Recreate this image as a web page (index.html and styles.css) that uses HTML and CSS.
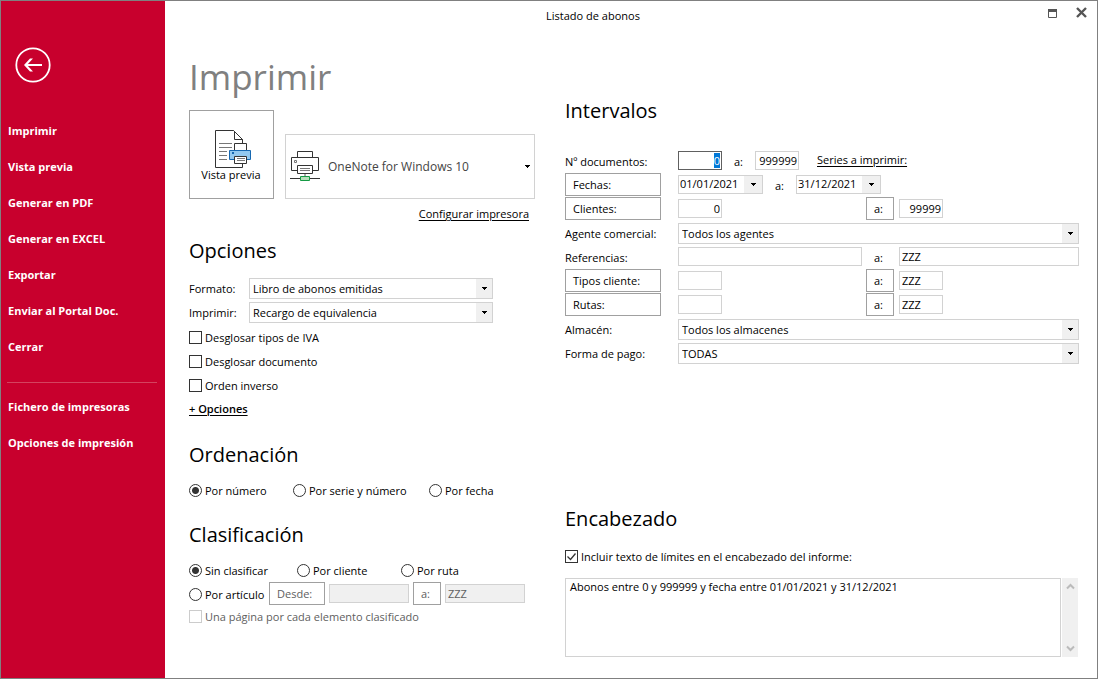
FILE: index.html
```html
<!DOCTYPE html>
<html lang="es">
<head>
<meta charset="utf-8">
<meta name="viewport" content="width=device-width, initial-scale=1">
<title>Listado de abonos</title>
<link rel="stylesheet" href="styles.css">
</head>
<body>
<div class="window">
  <aside class="sidebar">
    <button class="back" type="button" aria-label="Volver">
      <svg width="36" height="36" viewBox="0 0 36 36" fill="none" stroke="#fff">
        <circle cx="18" cy="18" r="16.7" stroke-width="1.8"/>
        <path d="M27 18H11" stroke-width="2"/>
        <path d="M18 11.5H15L9 18L15 24.5H18L12 18Z" fill="#fff" stroke="none"/>
      </svg>
    </button>
    <nav class="menu">
      <button type="button">Imprimir</button>
      <button type="button">Vista previa</button>
      <button type="button">Generar en PDF</button>
      <button type="button">Generar en EXCEL</button>
      <button type="button">Exportar</button>
      <button type="button">Enviar al Portal Doc.</button>
      <button type="button">Cerrar</button>
      <hr>
      <button type="button">Fichero de impresoras</button>
      <button type="button">Opciones de impresión</button>
    </nav>
  </aside>

  <div class="content">
    <header class="titlebar">
      <div class="caption">Listado de abonos</div>
      <div class="window-buttons">
        <button type="button" aria-label="Maximizar">
          <svg width="11" height="11" viewBox="0 0 11 11"><path d="M1.5 2.5H9.5V10.5H1.5Z" fill="none" stroke="#555"/><path d="M1 2H10V5H1Z" fill="#555"/></svg>
        </button>
        <button type="button" aria-label="Cerrar ventana">
          <svg width="11" height="11" viewBox="0 0 11 11"><path d="M1 1L10 10M10 1L1 10" fill="none" stroke="#555" stroke-width="2.4"/></svg>
        </button>
      </div>
    </header>

    <main class="columns">
      <div class="column">
        <h1>Imprimir</h1>
        <div class="print-row">
          <button class="preview" type="button">
            <svg width="38" height="40" viewBox="0 0 38 40" fill="none" stroke="#333">
              <path d="M28.5 15V10.5L19.5 1.5H1.5V38.5H28.5V34"/>
              <path d="M20.5 2.5V10.5H28.5M19.5 1.5L28.5 10.5"/>
              <path d="M5 14.5H18M5 18.5H18M5 22.5H13M5 26.5H13M5 30.5H13" stroke="#777"/>
              <path d="M20.5 14.5H32.5V21.5H20.5Z" fill="#fff"/>
              <path d="M15.5 21.5H36.5V30.5H15.5Z" fill="#92c9f0" stroke="#1668b1"/>
              <path d="M18 23H20V25H18Z" fill="#1668b1" stroke="none"/>
              <path d="M20.5 27.5H32.5V34.5H20.5Z" fill="#fff"/>
              <path d="M23 29.5H31M23 31.5H31" stroke="#777"/>
            </svg>
            <span>Vista previa</span>
          </button>
          <div class="printer">
            <svg width="30" height="32" viewBox="0 0 30 32" fill="none" stroke="#333">
              <path d="M7.5 6.5V0.5H22.5V6.5"/>
              <path d="M7.5 19.5H1.5V6.5H28.5V19.5H22.5"/>
              <path d="M4.5 9.5H6.5V11.5H4.5Z" stroke="#777"/>
              <path d="M7.5 14.5H22.5V22.5H7.5Z" fill="#fff"/>
              <path d="M10 17.5H20M10 19.5H20" stroke="#777"/>
              <path d="M15 23V25" stroke="#aaa" stroke-width="2"/>
              <path d="M0 27.5H30"/>
              <path d="M10.5 25.5H19.5V29.5H10.5Z" fill="#b5deb9" stroke="#159a44"/>
            </svg>
            <select aria-label="Impresora"><option>OneNote for Windows 10</option></select>
          </div>
        </div>
        <a class="configure" href="#">Configurar impresora</a>

        <section class="options">
          <h2>Opciones</h2>
          <div class="option-row">
            <label for="formato">Formato:</label>
            <select id="formato" class="field"><option>Libro de abonos emitidas</option></select>
          </div>
          <div class="option-row">
            <label for="imprimir">Imprimir:</label>
            <select id="imprimir" class="field"><option>Recargo de equivalencia</option></select>
          </div>
          <div class="checks">
            <label class="choice"><input type="checkbox">Desglosar tipos de IVA</label>
            <label class="choice"><input type="checkbox">Desglosar documento</label>
            <label class="choice"><input type="checkbox">Orden inverso</label>
          </div>
          <a class="more" href="#">+ Opciones</a>
        </section>

        <section class="sorting">
          <h2>Ordenación</h2>
          <div class="order-row">
            <label class="choice"><input type="radio" name="orden" checked>Por número</label>
            <label class="choice"><input type="radio" name="orden">Por serie y número</label>
            <label class="choice"><input type="radio" name="orden">Por fecha</label>
          </div>
        </section>

        <section class="grouping">
          <h2>Clasificación</h2>
          <div class="group-row">
            <label class="choice"><input type="radio" name="clase" checked>Sin clasificar</label>
            <label class="choice"><input type="radio" name="clase">Por cliente</label>
            <label class="choice"><input type="radio" name="clase">Por ruta</label>
          </div>
          <div class="article-row">
            <label class="choice"><input type="radio" name="clase">Por artículo</label>
            <button class="pick" type="button" disabled>Desde:</button>
            <input class="field" type="text" aria-label="Desde artículo" disabled>
            <button class="pick" type="button" disabled>a:</button>
            <input class="field" type="text" aria-label="Hasta artículo" value="ZZZ" disabled>
          </div>
          <label class="choice page-check"><input type="checkbox" disabled>Una página por cada elemento clasificado</label>
        </section>
      </div>

      <div class="column right">
        <section>
          <h2>Intervalos</h2>
          <div class="range">
            <label for="doc-desde">Nº documentos:</label>
            <div class="inline">
              <input id="doc-desde" class="field short number" type="text" value="0" autofocus>
              <label class="to" for="doc-hasta">a:</label>
              <input id="doc-hasta" class="field short number" type="text" value="999999">
              <a class="series" href="#">Series a imprimir:</a>
            </div>
          </div>
          <div class="range">
            <button class="pick" type="button">Fechas:</button>
            <div class="inline">
              <div class="field date"><input id="fecha-desde" type="text" aria-label="Desde fecha" value="01/01/2021"><button type="button" aria-label="Abrir calendario desde"></button></div>
              <label class="to" for="fecha-hasta">a:</label>
              <div class="field date"><input id="fecha-hasta" type="text" value="31/12/2021"><button type="button" aria-label="Abrir calendario hasta"></button></div>
            </div>
          </div>
          <div class="range">
            <button class="pick" type="button">Clientes:</button>
            <input class="field short number" type="text" aria-label="Desde cliente" value="0">
            <button class="pick" type="button">a:</button>
            <input class="field short number" type="text" aria-label="Hasta cliente" value="99999">
          </div>
          <div class="range">
            <label for="agente">Agente comercial:</label>
            <select id="agente" class="field wide"><option>Todos los agentes</option></select>
          </div>
          <div class="range">
            <label for="ref-desde">Referencias:</label>
            <input id="ref-desde" class="field" type="text">
            <label class="between" for="ref-hasta">a:</label>
            <input id="ref-hasta" class="field" type="text" value="ZZZ">
          </div>
          <div class="range">
            <button class="pick" type="button">Tipos cliente:</button>
            <input class="field short" type="text" aria-label="Desde tipo de cliente">
            <button class="pick" type="button">a:</button>
            <input class="field short" type="text" aria-label="Hasta tipo de cliente" value="ZZZ">
          </div>
          <div class="range">
            <button class="pick" type="button">Rutas:</button>
            <input class="field short" type="text" aria-label="Desde ruta">
            <button class="pick" type="button">a:</button>
            <input class="field short" type="text" aria-label="Hasta ruta" value="ZZZ">
          </div>
          <div class="range">
            <label for="almacen">Almacén:</label>
            <select id="almacen" class="field wide"><option>Todos los almacenes</option></select>
          </div>
          <div class="range">
            <label for="pago">Forma de pago:</label>
            <select id="pago" class="field wide"><option>TODAS</option></select>
          </div>
        </section>

        <section class="heading-text">
          <h2>Encabezado</h2>
          <label class="choice"><input type="checkbox" checked>Incluir texto de límites en el encabezado del informe:</label>
          <div class="memo">
            <textarea aria-label="Texto del encabezado">Abonos entre 0 y 999999 y fecha entre 01/01/2021 y 31/12/2021</textarea>
            <div class="scroll">
              <button type="button" aria-label="Subir"><svg width="9" height="7" viewBox="0 0 9 7"><path d="M1 5.5L4.5 2L8 5.5" fill="none" stroke="#bbb" stroke-width="2"/></svg></button>
              <button type="button" aria-label="Bajar"><svg width="9" height="7" viewBox="0 0 9 7"><path d="M1 1.5L4.5 5L8 1.5" fill="none" stroke="#bbb" stroke-width="2"/></svg></button>
            </div>
          </div>
        </section>
      </div>
    </main>
  </div>
</div>
<script src="main.js"></script>
</body>
</html>
```

FILE: styles.css
```css
* {
  box-sizing: border-box;
}

:root {
  --line: #d2d2d2;
  --button-line: #a0a0a0;
  --arrow: url("data:image/svg+xml,%3Csvg xmlns='http://www.w3.org/2000/svg' width='5' height='3'%3E%3Cpath d='M0 0H5V1H4V2H3V3H2V2H1V1H0Z' fill='%23000'/%3E%3C/svg%3E");
}

body {
  margin: 0;
  background: #fff;
  color: #000;
  font: 11px/16px "Open Sans", "Noto Sans", sans-serif;
}

button,
input,
select,
textarea {
  margin: 0;
  padding: 0;
  border: 0;
  border-radius: 0;
  outline: 0;
  background: none;
  color: inherit;
  font: inherit;
}

a {
  color: inherit;
  text-underline-offset: 2px;
}

svg {
  display: block;
  flex: none;
}

.window {
  display: flex;
  min-height: 100vh;
  border: 1px solid #808080;
}

/* Sidebar */

.sidebar {
  flex: none;
  width: 164px;
  padding-top: 46px;
  background: #c8002d;
  color: #fff;
}

.back {
  display: block;
  margin-left: 14px;
}

.menu {
  display: flex;
  flex-direction: column;
  padding: 30px 8px 0 6px;
}

.menu button {
  height: 36px;
  padding-left: 1px;
  font-weight: 700;
  text-align: left;
}

.menu hr {
  width: 100%;
  height: 1px;
  margin: 17px 0 6px;
  border: 0;
  background: #d4435f;
}

/* Title bar */

.content {
  display: flex;
  flex: 1;
  flex-direction: column;
  min-width: 0;
}

.titlebar {
  display: flex;
  height: 32px;
}

.caption {
  flex: 1;
  padding-top: 7px;
  text-align: center;
}

.window-buttons {
  display: flex;
  justify-content: flex-end;
  gap: 18px;
  width: 76px;
  padding: 6px 10px 0 0;
}

.window-buttons button {
  height: 11px;
}

/* Columns */

.columns {
  display: grid;
  flex: 1;
  grid-template-columns: 346px minmax(0, 1fr);
  gap: 30px;
  padding: 0 18px 21px 24px;
}

.column {
  display: flex;
  flex-direction: column;
}

.column.right {
  padding-top: 64px;
}

h1 {
  margin: 18px 0 7px;
  color: #808080;
  font-size: 35px;
  font-weight: 400;
  line-height: 52px;
}

h2 {
  margin: 0;
  font-size: 20px;
  font-weight: 400;
  line-height: 28px;
}

.print-row {
  display: flex;
  align-items: flex-end;
  gap: 11px;
}

.preview {
  display: flex;
  flex-direction: column;
  align-items: center;
  width: 85px;
  height: 89px;
  padding-top: 18px;
  border: 1px solid var(--button-line);
}

.preview svg {
  margin-left: 2px;
}

.preview span {
  margin: -2px 1px 0 0;
}

.printer {
  display: flex;
  flex: 1;
  align-items: center;
  height: 65px;
  padding: 0 4px;
  border: 1px solid var(--line);
}

.printer select {
  flex: 1;
  height: 40px;
  padding-left: 8px;
  appearance: none;
  background: var(--arrow) right center no-repeat;
  color: #444;
  font-size: 12px;
}

.configure {
  align-self: flex-end;
  margin: 7px 6px 0 0;
}

/* Shared controls */

.field {
  width: 100%;
  height: 19px;
  padding: 0 2px 1px;
  border: 1px solid var(--line);
}

.short {
  width: 44px;
}

.number {
  padding-right: 1px;
  text-align: right;
}

.number:focus {
  border-color: #606060;
}

.number::selection {
  background: #0078d7;
  color: #fff;
}

select.field {
  height: 21px;
  padding: 0 20px 0 3px;
  appearance: none;
  background: var(--arrow) right 5px center no-repeat, linear-gradient(#f0f0f0, #f0f0f0) right / 16px 100% no-repeat;
}

.pick {
  height: 23px;
  padding-left: 7px;
  border: 1px solid var(--button-line);
  text-align: left;
}

.choice {
  display: flex;
  align-items: flex-start;
  gap: 3px;
  height: 24px;
  padding-top: 4px;
  white-space: nowrap;
}

.choice input {
  flex: none;
  width: 13px;
  height: 13px;
  margin-top: 1px;
  appearance: none;
  border: 1px solid #333;
}

.choice input[type="radio"] {
  border-radius: 50%;
}

.choice input[type="radio"]:checked {
  background: radial-gradient(circle, #333 3px, transparent 4px);
}

.choice input[type="checkbox"]:checked {
  background: url("data:image/svg+xml,%3Csvg xmlns='http://www.w3.org/2000/svg' width='11' height='11' fill='none' stroke='%23333' stroke-width='1.3'%3E%3Cpath d='M1.5 5.5L4.5 8.5L9.5 2.5'/%3E%3C/svg%3E") center no-repeat;
}

.choice input:disabled {
  border-color: #ccc;
}

/* Left column */

.options {
  margin-top: 15px;
}

.options h2 {
  margin-bottom: 11px;
}

.option-row {
  display: grid;
  grid-template-columns: 60px 244px;
  align-items: end;
  height: 24px;
  padding-bottom: 1px;
}

.option-row label {
  padding-bottom: 2px;
}

.checks {
  margin: 2px 0 3px;
}

.more {
  display: block;
  width: max-content;
  font-weight: 600;
}

.sorting {
  margin-top: 24px;
}

.sorting h2,
.grouping h2 {
  margin-bottom: 10px;
}

.grouping {
  margin-top: 18px;
}

.order-row {
  display: grid;
  grid-template-columns: 104px 136px auto;
}

.group-row {
  display: grid;
  grid-template-columns: 108px 104px auto;
  height: 23px;
}

.article-row {
  display: grid;
  grid-template-columns: 76px 56px 80px 28px 80px;
  align-items: start;
  gap: 4px;
  height: 24px;
}

.article-row .choice {
  margin-top: 1px;
}

.article-row .field {
  margin-top: 2px;
  background: #f0f0f0;
}

.article-row :disabled,
.page-check {
  color: #606060;
}

.page-check {
  height: 22px;
  padding-top: 3px;
}

/* Right column */

.right h2 {
  margin-bottom: 24px;
}

.range {
  display: grid;
  grid-template-columns: 109px minmax(0, 184fr) 29px minmax(0, 180fr);
  align-items: start;
  column-gap: 4px;
  height: 24px;
}

.range > label {
  padding-top: 5px;
  white-space: nowrap;
}

.range .pick {
  width: 28px;
}

.range > .pick:first-child {
  width: 96px;
}

.range .field {
  margin-top: 2px;
}

.range .wide,
.range .inline {
  grid-column: 2 / 5;
}

.range .between {
  padding-left: 8px;
}

.inline {
  display: flex;
  align-items: flex-start;
}

.to {
  padding: 5px 12px 0;
}

.series {
  margin: 3px 0 0 18px;
}

.date {
  display: flex;
  width: 85px;
  padding: 0;
}

.date input {
  flex: 1;
  min-width: 0;
  padding: 0 0 1px 1px;
}

.date button {
  width: 18px;
  background: var(--arrow) center no-repeat #f0f0f0;
}

.heading-text {
  margin-top: auto;
}

.heading-text h2 {
  margin-bottom: 12px;
}

.memo {
  display: flex;
  gap: 1px;
  height: 79px;
  margin: 9px 1px 0 0;
}

.memo textarea {
  flex: 1;
  padding: 0 4px;
  border: 1px solid var(--line);
  resize: none;
}

.scroll {
  display: flex;
  flex-direction: column;
  justify-content: space-between;
  align-items: center;
  width: 16px;
  padding: 5px 0;
  background: #f0f0f0;
}
```

FILE: main.js
```js
const firstField = document.getElementById("doc-desde");
firstField.focus();
firstField.select();
```
